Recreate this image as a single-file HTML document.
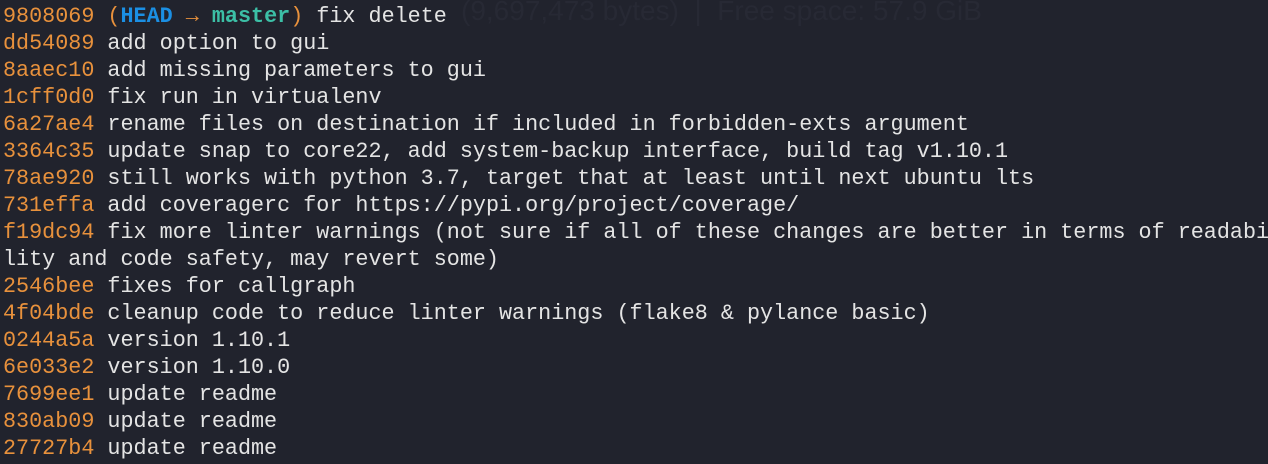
<!DOCTYPE html>
<html><head><meta charset="utf-8"><style>
html,body{margin:0;padding:0;width:1268px;height:464px;overflow:hidden;background:#21232d}
.wm{position:absolute;left:461px;top:-5px;font-family:"Liberation Sans",sans-serif;font-size:28px;color:#272934;white-space:pre}
pre{position:absolute;left:3px;top:3px;margin:0;font-family:"Liberation Mono",monospace;font-size:21.75px;line-height:27px;color:#e4e4e4;white-space:pre}
.h{color:#e8913c}.b{color:#1b8fe3;font-weight:bold}.t{color:#3cbfa6;font-weight:bold}
</style></head><body>
<div class="wm">(9,697,473 bytes)  |  Free space: 57.9 GiB</div>
<pre><span class="h">9808069 (</span><span class="b">HEAD</span><span class="h"> → </span><span class="t">master</span><span class="h">)</span> fix delete
<span class="h">dd54089</span> add option to gui
<span class="h">8aaec10</span> add missing parameters to gui
<span class="h">1cff0d0</span> fix run in virtualenv
<span class="h">6a27ae4</span> rename files on destination if included in forbidden-exts argument
<span class="h">3364c35</span> update snap to core22, add system-backup interface, build tag v1.10.1
<span class="h">78ae920</span> still works with python 3.7, target that at least until next ubuntu lts
<span class="h">731effa</span> add coveragerc for https://pypi.org/project/coverage/
<span class="h">f19dc94</span> fix more linter warnings (not sure if all of these changes are better in terms of readabi
lity and code safety, may revert some)
<span class="h">2546bee</span> fixes for callgraph
<span class="h">4f04bde</span> cleanup code to reduce linter warnings (flake8 &amp; pylance basic)
<span class="h">0244a5a</span> version 1.10.1
<span class="h">6e033e2</span> version 1.10.0
<span class="h">7699ee1</span> update readme
<span class="h">830ab09</span> update readme
<span class="h">27727b4</span> update readme</pre>
</body></html>
